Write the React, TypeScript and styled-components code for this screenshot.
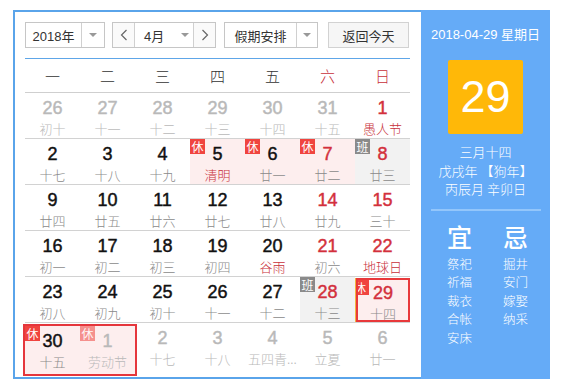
import React from 'react';
import styled, { createGlobalStyle } from 'styled-components';

const GlobalStyle = createGlobalStyle`
  body {
    margin: 0;
    background: #fff;
    font-family: "Liberation Sans", Arial, "Noto Sans CJK SC", sans-serif;
  }
`;

type Mark = 'rest' | 'work';

interface IDay {
  d: number;
  lunar: string;
  other?: boolean;
  weekend?: boolean;
  festival?: boolean;
  mark?: Mark;
  selected?: boolean;
}

const weeks: IDay[][] = [
  [
    { d: 26, lunar: '初十', other: true },
    { d: 27, lunar: '十一', other: true },
    { d: 28, lunar: '十二', other: true },
    { d: 29, lunar: '十三', other: true },
    { d: 30, lunar: '十四', other: true },
    { d: 31, lunar: '十五', other: true },
    { d: 1, lunar: '愚人节', weekend: true, festival: true },
  ],
  [
    { d: 2, lunar: '十七' },
    { d: 3, lunar: '十八' },
    { d: 4, lunar: '十九' },
    { d: 5, lunar: '清明', festival: true, mark: 'rest' },
    { d: 6, lunar: '廿一', mark: 'rest' },
    { d: 7, lunar: '廿二', weekend: true, mark: 'rest' },
    { d: 8, lunar: '廿三', weekend: true, mark: 'work' },
  ],
  [
    { d: 9, lunar: '廿四' },
    { d: 10, lunar: '廿五' },
    { d: 11, lunar: '廿六' },
    { d: 12, lunar: '廿七' },
    { d: 13, lunar: '廿八' },
    { d: 14, lunar: '廿九', weekend: true },
    { d: 15, lunar: '三十', weekend: true },
  ],
  [
    { d: 16, lunar: '初一' },
    { d: 17, lunar: '初二' },
    { d: 18, lunar: '初三' },
    { d: 19, lunar: '初四' },
    { d: 20, lunar: '谷雨', festival: true },
    { d: 21, lunar: '初六', weekend: true },
    { d: 22, lunar: '地球日', weekend: true, festival: true },
  ],
  [
    { d: 23, lunar: '初八' },
    { d: 24, lunar: '初九' },
    { d: 25, lunar: '初十' },
    { d: 26, lunar: '十一' },
    { d: 27, lunar: '十二' },
    { d: 28, lunar: '十三', weekend: true, mark: 'work' },
    { d: 29, lunar: '十四', weekend: true, mark: 'rest', selected: true },
  ],
];

const lastWeekRange: IDay[] = [
  { d: 30, lunar: '十五', mark: 'rest' },
  { d: 1, lunar: '劳动节', other: true, mark: 'rest' },
];

const lastWeekRest: IDay[] = [
  { d: 2, lunar: '十七', other: true },
  { d: 3, lunar: '十八', other: true },
  { d: 4, lunar: '五四青...', other: true },
  { d: 5, lunar: '立夏', other: true },
  { d: 6, lunar: '廿一', other: true },
];

const weekNames = ['一', '二', '三', '四', '五', '六', '日'];

const Widget = styled.div`
  display: flex;
  width: 537px;
  height: 369px;
  margin: 10px 0 0 13px;
`;

const MainPanel = styled.div`
  border: 2px solid #5aa4ea;
  border-right: none;
  padding: 10px 0 0 10px;
  box-sizing: border-box;
  width: 408px;
`;

const Toolbar = styled.div`
  display: flex;
  height: 26px;
  width: 385px;
`;

const Control = styled.div<{ $w: number; $ml?: number }>`
  display: flex;
  width: ${(p) => p.$w}px;
  margin-left: ${(p) => p.$ml || 0}px;
  height: 26px;
  box-sizing: border-box;
  border: 1px solid #c6c6c6;
  background: #fff;
  font-size: 13px;
  color: #333;
`;

const ControlText = styled.div<{ $w: number }>`
  width: ${(p) => p.$w}px;
  display: flex;
  align-items: center;
  justify-content: center;
  font-family: "Liberation Sans", "Noto Sans CJK SC", sans-serif;
`;

const Caret = styled.div<{ $divider?: boolean }>`
  flex: 1;
  display: flex;
  align-items: center;
  justify-content: center;
  border-left: ${(p) => (p.$divider ? '1px solid #d0d0d0' : 'none')};
  &::after {
    content: '';
    border-left: 4px solid transparent;
    border-right: 4px solid transparent;
    border-top: 4px solid #999;
  }
`;

const ArrowBtn = styled.div<{ $side: 'l' | 'r' }>`
  width: 21px;
  display: flex;
  align-items: center;
  justify-content: center;
  background: #fafafa;
  ${(p) => (p.$side === 'l' ? 'border-right: 1px solid #d0d0d0;' : 'border-left: 1px solid #d0d0d0;')}
`;

const MonthText = styled.div`
  flex: 1;
  display: flex;
  align-items: center;
  padding-left: 9px;
  gap: 17px;
  &::after {
    content: '';
    border-left: 4px solid transparent;
    border-right: 4px solid transparent;
    border-top: 4px solid #999;
  }
`;

const TodayButton = styled.button`
  width: 81px;
  height: 26px;
  margin-left: 10px;
  border: 1px solid #d2d2d2;
  background: #f6f6f6;
  font-family: "Liberation Sans", "Noto Sans CJK SC", sans-serif;
  font-size: 13px;
  color: #333;
  padding: 0;
`;

const Grid = styled.div`
  width: 385px;
  margin-top: 10px;
  border-top: 1px solid #5ea6e8;
`;

const HeadRow = styled.div`
  display: flex;
  height: 33px;
  border-bottom: 1px solid #cfcfcf;
`;

const HeadCell = styled.div<{ $weekend: boolean }>`
  width: 55px;
  display: flex;
  align-items: center;
  justify-content: center;
  font-size: 15px;
  font-family: "Noto Sans CJK SC", sans-serif;
  font-weight: 300;
  color: ${(p) => (p.$weekend ? '#c7303a' : '#333')};
`;

const WeekRow = styled.div<{ $last?: boolean }>`
  display: flex;
  height: ${(p) => (p.$last ? '54px' : '45px')};
  border-bottom: ${(p) => (p.$last ? 'none' : '1px solid #d2d2d2')};
`;

const RangeBox = styled.div`
  display: flex;
  margin: 1px -2px 0 -2px;
  height: 52px;
  box-sizing: border-box;
  border: 2px solid #e5363c;
`;

const Cell = styled.div<{ $bg: string; $selected?: boolean; $tall?: boolean }>`
  position: relative;
  width: 55px;
  box-sizing: border-box;
  height: ${(p) => (p.$tall ? '48px' : '45px')};
  display: flex;
  flex-direction: column;
  align-items: center;
  padding-top: ${(p) => (p.$selected ? '3px' : '5px')};
  background: ${(p) => p.$bg};
  overflow: hidden;
  ${(p) =>
    p.$selected &&
    `
    border: 2px solid #e8393b;
    box-shadow: -1px 0 0 #f3b43c;
    margin: 1px 0 0 1px;
    width: 54px;
    height: 44px;
  `}
`;

const DayNum = styled.div<{ $color: string }>`
  font-size: 18px;
  line-height: 21px;
  color: ${(p) => p.$color};
  font-family: "Liberation Sans", Arial, sans-serif;
  -webkit-text-stroke: 0.45px ${(p) => p.$color};
`;

const Lunar = styled.div<{ $color: string }>`
  margin-top: 1px;
  font-size: 13px;
  line-height: 17px;
  white-space: nowrap;
  color: ${(p) => p.$color};
  font-family: "Noto Sans CJK SC", sans-serif;
  font-weight: 300;
`;

const Badge = styled.span<{ $kind: Mark; $faded?: boolean; $clip?: boolean }>`
  position: absolute;
  left: 0;
  top: 0;
  width: ${(p) => (p.$clip ? '11px' : '15px')};
  height: 15px;
  overflow: hidden;
  display: flex;
  justify-content: ${(p) => (p.$clip ? 'flex-start' : 'center')};
  align-items: center;
  font-size: 12px;
  line-height: 15px;
  color: #fff;
  font-family: "Noto Sans CJK SC", sans-serif;
  background: ${(p) => (p.$kind === 'rest' ? '#f0443f' : '#8a8a8a')};
  opacity: ${(p) => (p.$faded ? 0.55 : 1)};
  & > span {
    flex-shrink: 0;
    margin-left: ${(p) => (p.$clip ? '-4px' : '0')};
  }
`;

const SidePanel = styled.div`
  width: 129px;
  background: #65abf7;
  display: flex;
  flex-direction: column;
  align-items: center;
  padding-top: 15px;
  box-sizing: border-box;
  color: #fff;
  font-family: "Liberation Sans", "Noto Sans CJK SC", sans-serif;
`;

const DateLine = styled.div`
  font-size: 13px;
  line-height: 20px;
  white-space: nowrap;
`;

const BigDay = styled.div`
  margin-top: 15px;
  width: 75px;
  height: 74px;
  border-radius: 2px;
  background: #ffb808;
  display: flex;
  align-items: center;
  justify-content: center;
  font-size: 45px;
  font-family: "Liberation Sans", Arial, sans-serif;
`;

const LunarInfo = styled.div`
  margin-top: 9px;
  font-size: 13px;
  line-height: 18.5px;
  text-align: center;
  font-family: "Noto Sans CJK SC", sans-serif;
  font-weight: 300;
`;

const Divider = styled.div`
  margin-top: 10px;
  width: 110px;
  height: 2px;
  background: #93c6fb;
`;

const Almanac = styled.div`
  margin-top: 10px;
  display: grid;
  grid-template-columns: 56px 56px;
  padding-left: 4px;
`;

const AlmanacCol = styled.div`
  display: flex;
  flex-direction: column;
  align-items: center;
`;

const AlmanacHead = styled.div`
  font-size: 25px;
  line-height: 31px;
  font-weight: 500;
  font-family: "Noto Sans CJK SC", sans-serif;
  margin-bottom: 3px;
`;

const AlmanacItem = styled.div`
  font-size: 12.5px;
  line-height: 18.5px;
  font-family: "Noto Sans CJK SC", sans-serif;
  font-weight: 300;
`;

const Chevron = ({ dir }: { dir: 'l' | 'r' }) => (
  <svg width="8" height="12" viewBox="0 0 8 12" fill="none" stroke="#666" strokeWidth="1.2">
    {dir === 'l' ? <path d="M6.5 1 L1.5 6 L6.5 11" /> : <path d="M1.5 1 L6.5 6 L1.5 11" />}
  </svg>
);

const dayColors = (day: IDay) => {
  if (day.other) return { num: '#b9b9b9', lunar: '#b9b9b9' };
  return {
    num: day.weekend ? '#d3303c' : '#111',
    lunar: day.festival ? '#c8303a' : '#8a8a8a',
  };
};

const cellBg = (day: IDay) => {
  if (day.mark === 'rest') return '#fdeeee';
  if (day.mark === 'work') return '#f2f2f2';
  return 'transparent';
};

const DayCell = ({ day, tall }: { day: IDay; tall?: boolean }) => {
  const c = dayColors(day);
  return (
    <Cell $bg={cellBg(day)} $selected={day.selected} $tall={tall}>
      {day.mark && (
        <Badge $kind={day.mark} $faded={day.other} $clip={day.selected}>
          <span>{day.mark === 'rest' ? '休' : '班'}</span>
        </Badge>
      )}
      <DayNum $color={c.num}>{day.d}</DayNum>
      <Lunar $color={c.lunar}>{day.lunar}</Lunar>
    </Cell>
  );
};

const App = () => {
  return (
    <>
      <GlobalStyle />
      <Widget>
        <MainPanel>
          <Toolbar>
            <Control $w={80}>
              <ControlText $w={55}>2018年</ControlText>
              <Caret $divider />
            </Control>
            <Control $w={104} $ml={7}>
              <ArrowBtn $side="l">
                <Chevron dir="l" />
              </ArrowBtn>
              <MonthText>4月</MonthText>
              <ArrowBtn $side="r">
                <Chevron dir="r" />
              </ArrowBtn>
            </Control>
            <Control $w={94} $ml={8}>
              <ControlText $w={71}>假期安排</ControlText>
              <Caret $divider />
            </Control>
            <TodayButton>返回今天</TodayButton>
          </Toolbar>

          <Grid>
            <HeadRow>
              {weekNames.map((n, i) => (
                <HeadCell key={n} $weekend={i >= 5}>
                  {n}
                </HeadCell>
              ))}
            </HeadRow>
            {weeks.map((w, i) => (
              <WeekRow key={i}>
                {w.map((day, j) => (
                  <DayCell key={j} day={day} />
                ))}
              </WeekRow>
            ))}
            <WeekRow $last>
              <RangeBox>
                {lastWeekRange.map((day, j) => (
                  <DayCell key={j} day={day} tall />
                ))}
              </RangeBox>
              {lastWeekRest.map((day, j) => (
                <DayCell key={j} day={day} />
              ))}
            </WeekRow>
          </Grid>
        </MainPanel>

        <SidePanel>
          <DateLine>2018-04-29 星期日</DateLine>
          <BigDay>29</BigDay>
          <LunarInfo>
            三月十四
            <br />
            戊戌年 【狗年】
            <br />
            丙辰月 辛卯日
          </LunarInfo>
          <Divider />
          <Almanac>
            <AlmanacCol>
              <AlmanacHead>宜</AlmanacHead>
              {['祭祀', '祈福', '裁衣', '合帐', '安床'].map((t) => (
                <AlmanacItem key={t}>{t}</AlmanacItem>
              ))}
            </AlmanacCol>
            <AlmanacCol>
              <AlmanacHead>忌</AlmanacHead>
              {['掘井', '安门', '嫁娶', '纳采'].map((t) => (
                <AlmanacItem key={t}>{t}</AlmanacItem>
              ))}
            </AlmanacCol>
          </Almanac>
        </SidePanel>
      </Widget>
    </>
  );
};

export default App;
